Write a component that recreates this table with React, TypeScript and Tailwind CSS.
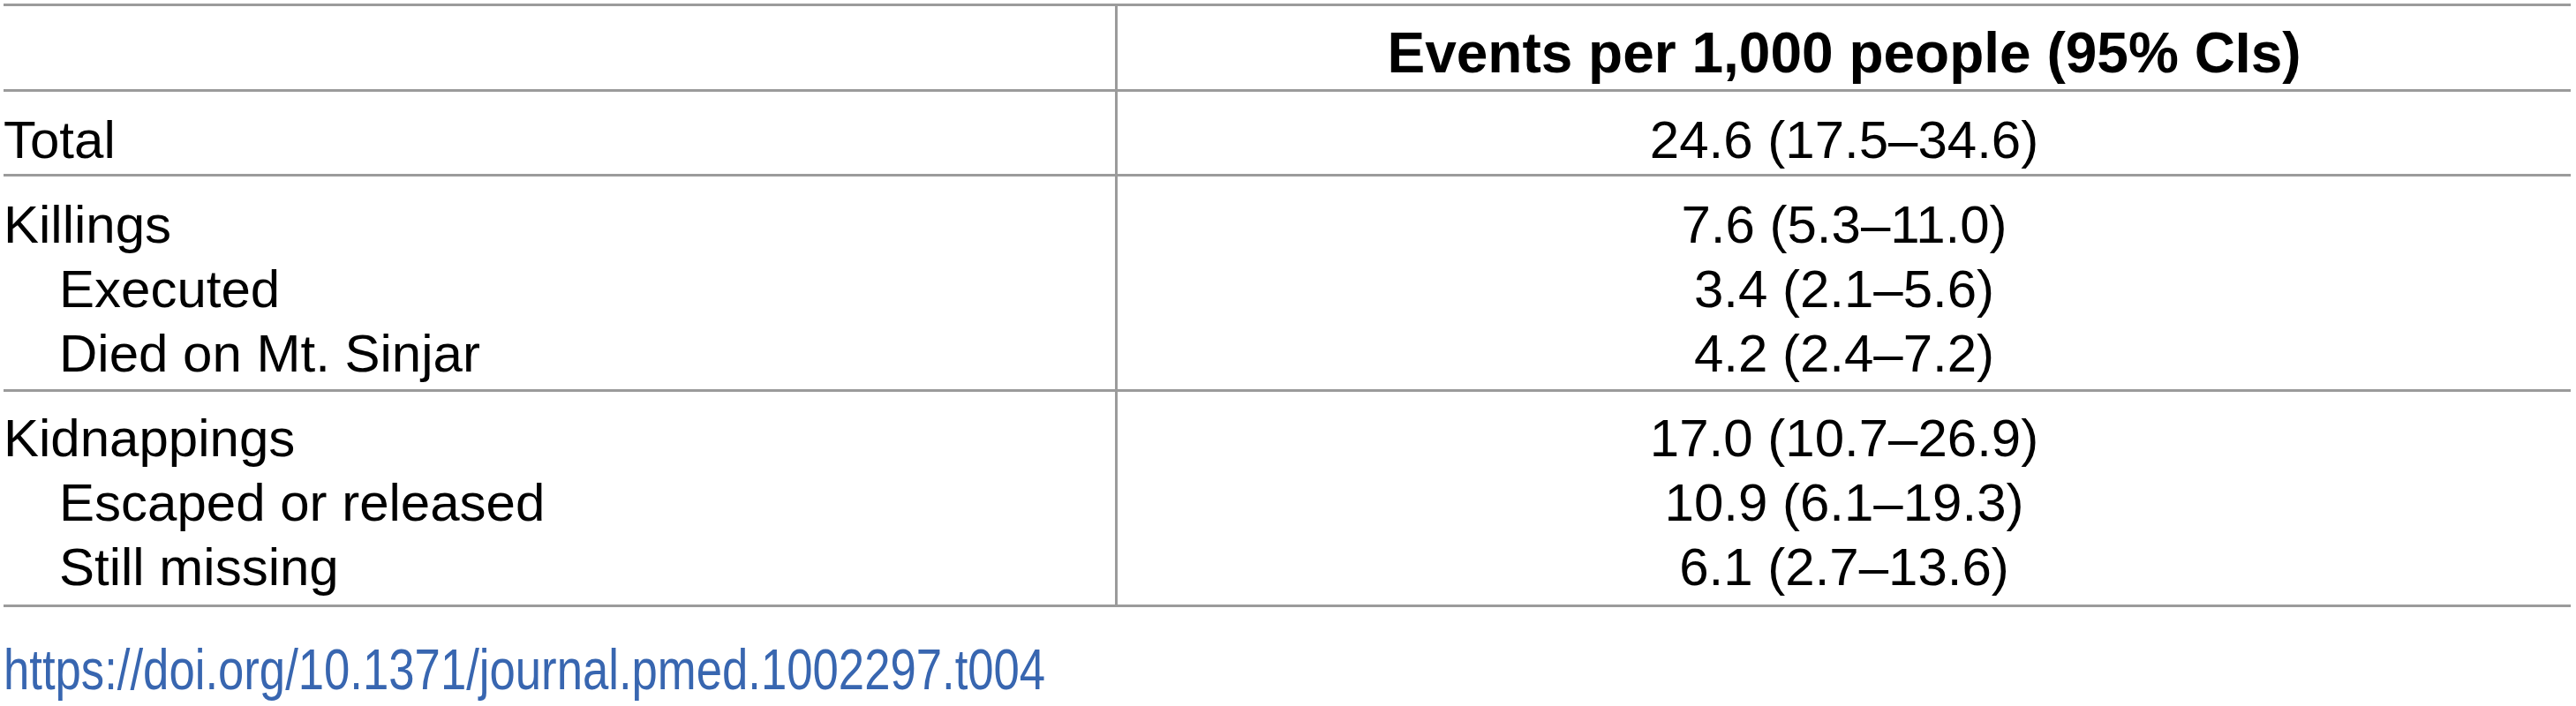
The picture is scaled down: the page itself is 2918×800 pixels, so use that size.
import React from 'react';

interface Row {
  label: string;
  value: string;
  sub?: boolean;
}

interface Group {
  rows: Row[];
  pad: string;
}

const groups: Group[] = [
  { rows: [{ label: 'Total', value: '24.6 (17.5–34.6)' }], pad: 'pt-[18px] pb-[2px]' },
  {
    rows: [
      { label: 'Killings', value: '7.6 (5.3–11.0)' },
      { label: 'Executed', value: '3.4 (2.1–5.6)', sub: true },
      { label: 'Died on Mt. Sinjar', value: '4.2 (2.4–7.2)', sub: true },
    ],
    pad: 'pt-[18px] pb-[4px]',
  },
  {
    rows: [
      { label: 'Kidnappings', value: '17.0 (10.7–26.9)' },
      { label: 'Escaped or released', value: '10.9 (6.1–19.3)', sub: true },
      { label: 'Still missing', value: '6.1 (2.7–13.6)', sub: true },
    ],
    pad: 'pt-[16px] pb-[6px]',
  },
];

export default function App() {
  return (
    <div className="bg-white w-[2918px] h-[800px] overflow-hidden text-black font-['Liberation_Sans',Arial,sans-serif] text-[60px] leading-[73px]">
      <div className="ml-[4px] mt-[4px] w-[2908px] border-t-[3px] border-[#9b9b9b]">
        {/* header */}
        <div className="flex border-b-[3px] border-[#9b9b9b]">
          <div className="w-[1259px] shrink-0" />
          <div className="flex-1 border-l-[3px] border-[#9b9b9b] pt-[17px] pb-[4px] text-center font-bold text-[64px]">
            Events per 1,000 people (95% CIs)
          </div>
        </div>

        {groups.map((g, i) => (
          <div key={i} className="flex border-b-[3px] border-[#9b9b9b]">
            <div className={`w-[1259px] shrink-0 ${g.pad}`}>
              {g.rows.map(r => (
                <div key={r.label} className={r.sub ? 'pl-[63px]' : ''}>
                  {r.label}
                </div>
              ))}
            </div>
            <div className={`flex-1 border-l-[3px] border-[#9b9b9b] text-center ${g.pad}`}>
              {g.rows.map(r => (
                <div key={r.label}>{r.value}</div>
              ))}
            </div>
          </div>
        ))}
      </div>

      {/* narrow face isn't installed, so squeeze the regular one */}
      <a
        href="https://doi.org/10.1371/journal.pmed.1002297.t004"
        className="inline-block ml-[4px] mt-[35px] origin-left scale-x-[0.823] text-[#3866b0] text-[64px] leading-[73px] whitespace-nowrap"
      >
        https://doi.org/10.1371/journal.pmed.1002297.t004
      </a>
    </div>
  );
}
